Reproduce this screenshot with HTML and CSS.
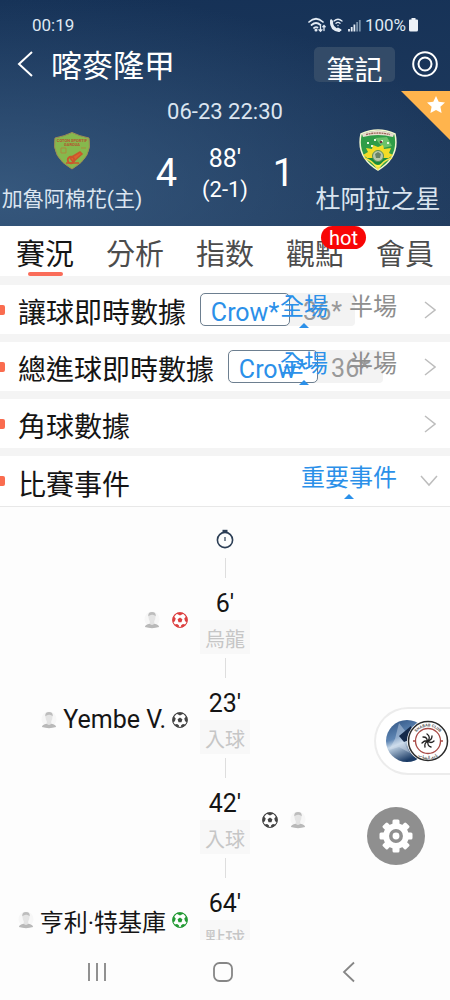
FILE: index.html
```html
<!DOCTYPE html>
<html lang="zh-Hant">
<head>
<meta charset="utf-8">
<meta name="viewport" content="width=device-width, initial-scale=1">
<title>喀麥隆甲</title>
<link rel="stylesheet" href="styles.css">
</head>
<body>
<svg class="defs" aria-hidden="true">
  <symbol id="ball" viewBox="0 0 24 24">
    <circle cx="12" cy="12" r="11.500" fill="currentColor"/>
    <path fill="#fff" fill-rule="evenodd" d="M12 5.200 7 2.600 3.300 7 5.600 9.600 4.400 14 1.800 15.200 4 18.600 7.600 18 10.400 20 10.200 22.600 13.800 22.600 13.600 20 16.400 18 20 18.600 22.200 15.200 19.600 14 18.400 9.600 20.700 7 17 2.600ZM12 8.300 15.600 11 14.200 15.200 9.800 15.200 8.400 11Z"/>
    <circle cx="12" cy="12" r="11" fill="none" stroke="currentColor" stroke-width="1.300"/>
  </symbol>
  <symbol id="person" viewBox="0 0 18 20">
    <circle cx="9" cy="9" r="8.500" fill="#f7f7f7"/>
    <path d="M6.500 10h5v5h-5z" fill="#e3e3e3"/>
    <ellipse cx="9" cy="7" rx="3.800" ry="5" fill="#e4e4e4"/>
    <path d="M4.800 6Q4.300 1 9 1T13.200 6Q11.500 3.800 9 4.200T4.800 6Z" fill="#bdbdbd"/>
    <path d="M1 18Q1.500 15 6.300 14.300 9 16.500 11.700 14.300 16.500 15 17 18 9 20.500 1 18Z" fill="#b9b9b9"/>
  </symbol>
</svg>
<div class="screen">
  <header class="hero">
    <div class="status">
      <span>00:19</span>
      <span class="status-right">
        <svg width="54" height="18" viewBox="0 0 54 18" fill="none" stroke="#e4ecf5" stroke-width="1.700" stroke-linecap="round">
          <path d="M1 6Q8-.5 15 6M3.500 9Q8 5 12.500 9M6 12Q8 10.300 9.500 11.500"/><circle cx="8" cy="14" r=".7"/>
          <path stroke-width="1.300" d="M12.500 10v5M11 13.800l1.500 1.500 1.500-1.500M16 14.500v-5M14.800 10.800 16 9.500l1.200 1.300"/>
          <path stroke-width="3" d="M23.500 5.500Q23 13 31 14.500"/><path stroke-width="2" d="M23.200 4.200v3M32.500 14l-2.500-1.500"/>
          <path stroke-width="1.300" d="M26 5Q30 1.500 34 5M28 7.300Q30 5.600 32 7.300M30 9.500v0"/>
          <path stroke-linecap="butt" stroke-width="1.800" d="M41 15.500v-2.500M43.700 15.500v-4.500M46.400 15.500V8.500"/>
          <path stroke-linecap="butt" stroke-width="1.800" stroke="#7890a8" d="M49.100 15.500V6M51.800 15.500V4"/>
        </svg>
        <span>100%</span>
        <svg width="9" height="14" viewBox="0 0 9 14"><path fill="#edf2f8" d="M2.500 0h4v1.500H8Q9 1.500 9 2.500V12q0 1.500-1.500 1.500h-6Q0 13.500 0 12V2.500q0-1 1-1h1.500Z"/></svg>
      </span>
    </div>
    <div class="titlebar">
      <button class="plain" aria-label="返回"><svg width="18" height="28" viewBox="0 0 18 28" fill="none" stroke="#fff" stroke-width="2"><path d="M16 2 3 14 16 26"/></svg></button>
      <h1>喀麥隆甲</h1>
      <button class="note">筆記</button>
      <button class="plain" aria-label="更多"><svg width="26" height="26" viewBox="0 0 26 26" fill="none" stroke="#fff" stroke-width="2"><circle cx="13" cy="13" r="11.800"/><circle cx="13" cy="13" r="6.500"/></svg></button>
    </div>
    <button class="fav" aria-label="收藏"><svg width="49" height="49" viewBox="0 0 49 49"><path fill="#ffb44d" d="M0 0H49V49Z"/><path fill="#fff" d="m35 5 2.700 5.700 6.300.8-4.600 4.300 1.200 6.200-5.600-3-5.600 3 1.200-6.200-4.600-4.300 6.300-.8Z"/></svg></button>
    <time class="date">06-23 22:30</time>
    <div class="match">
      <div class="team">
        <svg width="40" height="42" viewBox="0 0 40 42">
          <path d="M20 3.500Q27 7 37 9 41 28 20 40 -1 28 3 9 13 7 20 3.500Z" fill="#86b84d" stroke="#a08a55"/>
          <text x="20" y="13" class="crest-text">COTON SPORTIF</text><text x="20" y="17" class="crest-text">GAROUA</text>
          <path d="M9 19h5v5H9zM29 19h5" fill="none" stroke="#a98b3d"/>
          <path d="m18 29 10-6 2 2-9 8ZM14 34h13" fill="#dc6330" stroke="#c9572c" stroke-width="1.500"/>
          <circle cx="19" cy="31" r="3.300" fill="none" stroke="#c9572c" stroke-width="1.800"/>
        </svg>
        <span class="name">加魯阿棉花(主)</span>
      </div>
      <strong class="score">4</strong>
      <div class="clock"><span class="minute">88'</span><span class="half">(2-1)</span></div>
      <strong class="score">1</strong>
      <div class="team">
        <svg width="40" height="42" viewBox="0 0 40 42">
          <path d="M3 5Q20-3 37 5 42 28 20 41-2 28 3 5Z" fill="#2f9d47" stroke="#f4f7d0" stroke-width="1.500"/>
          <path d="M4 5Q20-2 36 5L35 8Q20 4 5 8Z" fill="#e9ded0"/><path d="M8 5.500Q20 2.500 32 5.500" fill="none" stroke="#9b6658" stroke-width="1.300" stroke-dasharray="2 .6"/>
          <path d="M17 9 29 8 34 17 25 19Z" fill="#6cc26a"/>
          <path d="M5 26 10 23 8 19 14 20 15 16 20 18 25 16 26 20 33 19 31 24 35 26 28 31 12 31Z" fill="#f3dc27"/>
          <path d="M6 29Q14 31 20 40 25 31 34 29" fill="#188b3b" stroke="#f3e34a" stroke-width="1.500"/>
          <circle cx="20" cy="27" r="5.500" fill="#b9c8aa" stroke="#5b8d54"/><path d="M17 25l3-2 3 2-1 4h-4Z" fill="#688265"/>
          <path d="M9 14h2M13 17h2M16 11h2M29 14h2M23 12h2" stroke="#e8f6dc" stroke-width="1.800"/><circle cx="23" cy="13" r="1.300" fill="#6e3440"/>
          <path d="M15 35 20 39 25 35 20 36Z" fill="#fff04b"/>
        </svg>
        <span class="name large">杜阿拉之星</span>
      </div>
    </div>
  </header>

  <nav class="tabs">
    <a class="active" href="#live">賽況</a>
    <a href="#analysis">分析</a>
    <a href="#index">指数</a>
    <a href="#views">觀點<span class="hot">hot</span></a>
    <a href="#member">會員</a>
  </nav>

  <main>
    <section class="panel">
      <h2>讓球即時數據</h2>
      <div class="sources"><button class="on">Crow*</button><button>36*</button></div>
      <div class="periods"><button class="on">全場</button><button>半場</button></div>
      <svg class="chev" width="12" height="18" viewBox="0 0 12 18"><path d="m1 1 10 8L1 17"/></svg>
    </section>
    <section class="panel">
      <h2>總進球即時數據</h2>
      <div class="sources"><button class="on">Crow*</button><button>36*</button></div>
      <div class="periods"><button class="on">全場</button><button>半場</button></div>
      <svg class="chev" width="12" height="18" viewBox="0 0 12 18"><path d="m1 1 10 8L1 17"/></svg>
    </section>
    <section class="panel">
      <h2>角球數據</h2>
      <svg class="chev" width="12" height="18" viewBox="0 0 12 18"><path d="m1 1 10 8L1 17"/></svg>
    </section>
    <section class="panel last">
      <h2>比賽事件</h2>
      <div class="periods"><button class="on">重要事件</button></div>
      <svg class="chev down" width="18" height="12" viewBox="0 0 18 12"><path d="m1 1 8 9 8-9"/></svg>
    </section>

    <div class="timeline">
      <svg class="watch" width="18" height="20" viewBox="0 0 18 20" fill="none" stroke="#2c3e55" stroke-width="1.600"><circle cx="9" cy="11" r="7.600"/><path stroke-width="2.400" d="M6.500 2h5"/><path stroke-width="1.200" d="M9 8v4"/></svg>
      <ol>
        <li>
          <div class="side home"><svg class="avatar"><use href="#person"/></svg><span></span><svg class="ball red"><use href="#ball"/></svg></div>
          <div class="mid"><b>6'</b><span>烏龍</span></div>
        </li>
        <li>
          <div class="side home"><svg class="avatar"><use href="#person"/></svg><span>Yembe V.</span><svg class="ball"><use href="#ball"/></svg></div>
          <div class="mid"><b>23'</b><span>入球</span></div>
        </li>
        <li>
          <div class="mid"><b>42'</b><span>入球</span></div>
          <div class="side away"><svg class="ball"><use href="#ball"/></svg><span></span><svg class="avatar"><use href="#person"/></svg></div>
        </li>
        <li>
          <div class="side home"><svg class="avatar"><use href="#person"/></svg><span class="han">亨利·特基庫</span><svg class="ball green"><use href="#ball"/></svg></div>
          <div class="mid"><b>64'</b><span>點球</span></div>
        </li>
      </ol>
    </div>
  </main>

  <div class="floating">
    <button class="matches" aria-label="賽事">
      <svg width="66" height="46" viewBox="0 0 66 46">
        <defs>
          <linearGradient id="sky" x1="0" y1="0" x2=".4" y2="1"><stop offset="0" stop-color="#2c5080"/><stop offset=".45" stop-color="#5f86b4"/><stop offset=".6" stop-color="#c5d7e8"/><stop offset="1" stop-color="#1c3c66"/></linearGradient>
          <path id="ringTop" d="M29.500 23a14.500 14.500 0 0 1 29 0"/>
          <path id="ringBottom" d="M26 23a18 18 0 0 0 36 0"/>
        </defs>
        <circle cx="23" cy="23" r="21" fill="url(#sky)"/>
        <path d="M15 5 22 14 20 25 26 35 15 29 5 32 11 21Z" fill="#dbe7f2" opacity=".4"/><path d="M15 18 27 8 30 20 20 24Z" fill="#14294a"/>
        <circle cx="44" cy="23" r="21" fill="#fff"/>
        <circle cx="44" cy="23" r="19.500" fill="#fff" stroke="#2b2b2b" stroke-width="1.500"/>
        <circle cx="44" cy="23" r="12.500" fill="none" stroke="#a94a46" stroke-width="1.300"/>
        <text class="ring-text"><textPath href="#ringTop" startOffset="50%">SHABAB CLUB</textPath></text>
        <text class="ring-text"><textPath href="#ringBottom" startOffset="50%">نادي الشباب</textPath></text>
        <path d="M29 23h2M57 23h2" stroke="#a94a46" stroke-width="1.500"/>
        <path d="M39 19q5 0 4 5M43 16q4 3 1 7M48 18q0 4-4 5M50 23q-3 3-6 0M47 29q-4-1-3-6M41 29q-1-4 3-6M38 25q3-3 6-2" fill="none" stroke="#222" stroke-width="1.300" stroke-linecap="round"/>
      </svg>
    </button>
    <button class="settings" aria-label="設定">
      <svg width="34" height="34" viewBox="-17 -17 34 34">
        <g fill="#fff"><circle r="12.800"/>
          <g id="teeth"><rect x="-3.500" y="-16.500" width="7" height="33" rx="1.500"/><rect x="-16.500" y="-3.500" width="33" height="7" rx="1.500"/></g>
          <use href="#teeth" transform="rotate(45)"/></g>
        <circle r="5.200" fill="#fff" stroke="#8f8f8f" stroke-width="3.500"/>
      </svg>
    </button>
  </div>

  <footer class="sysnav">
    <button class="plain" aria-label="最近"><svg width="22" height="22" viewBox="0 0 22 22"><path d="M3 2v18M11 2v18M19 2v18"/></svg></button>
    <button class="plain" aria-label="主畫面"><svg width="22" height="22" viewBox="0 0 22 22"><rect x="2" y="2" width="18" height="18" rx="5.500"/></svg></button>
    <button class="plain" aria-label="返回"><svg width="22" height="22" viewBox="0 0 22 22"><path d="M16 1.500 6 11l10 9.500"/></svg></button>
  </footer>
</div>
</body>
</html>
```
FILE: styles.css
```css
* { box-sizing: border-box; }
body {
  margin: 0;
  font-family: Roboto, "Noto Sans CJK TC", sans-serif;
  color: #151515;
  background: #fdfdfd;
}
h1, h2, ol { margin: 0; padding: 0; font-weight: 400; }
button { font: inherit; color: inherit; border: 0; background: none; padding: 0; cursor: pointer; }
a { color: inherit; text-decoration: none; }
svg { display: block; flex: none; }
.defs { position: absolute; width: 0; height: 0; }
.screen { position: relative; display: flex; flex-direction: column; height: 100vh; overflow: hidden; }

.hero {
  position: relative;
  flex: none;
  padding-bottom: 10px;
  color: #fff;
  background:
    radial-gradient(ellipse at 0% 85%, rgba(62, 98, 136, .75), rgba(62, 98, 136, 0) 75%),
    linear-gradient(175deg, #153156, #213c5f);
}
.status { display: flex; justify-content: space-between; align-items: center; height: 46px; padding: 4px 32px 0; font-size: 17px; color: #dfe8f2; }
.status-right { display: flex; align-items: center; gap: 3px; }
.titlebar { display: flex; align-items: center; height: 36px; padding: 0 12px 0 16px; }
.titlebar h1 { flex: 1; padding: 6px 0 0 17px; font-size: 31px; line-height: 36px; }
.note { width: 81px; height: 35px; padding-top: 5px; margin-right: 17px; border-radius: 5px; background: #334b68; font-size: 28px; line-height: 40px; overflow: hidden; }
.fav { position: absolute; right: 0; top: 91px; }
.date { display: block; padding-top: 17px; text-align: center; font-size: 22px; line-height: 26px; color: #dbe5f0; }
.match { display: grid; grid-template-columns: 32fr 10fr 16fr 10fr 32fr; justify-items: center; padding-top: 4px; }
.team { display: flex; flex-direction: column; align-items: center; gap: 12px; color: #dbe5f0; white-space: nowrap; }
.name { font-size: 21px; line-height: 33px; }
.name.large { font-size: 25px; }
.score { padding-top: 21px; font-size: 38px; line-height: 46px; font-weight: 400; }
.clock { display: flex; flex-direction: column; align-items: center; padding-top: 14px; }
.minute { font-size: 25px; line-height: 32px; }
.half { font-size: 22px; line-height: 30px; }
.crest-text { font-size: 4px; font-weight: 700; text-anchor: middle; fill: #b5542f; }

.tabs { display: grid; grid-template-columns: repeat(5, 1fr); flex: none; height: 50px; background: #fff; }
.tabs a { position: relative; display: flex; justify-content: center; height: 50px; padding-top: 8px; font-size: 29px; line-height: 42px; color: #4c4c4c; }
.tabs .active { color: #151515; }
.tabs .active::after { content: ""; position: absolute; bottom: 0; width: 35px; height: 4px; border-radius: 2px; background: #fa6c59; }
.hot { position: absolute; left: 51px; top: 0; width: 45px; height: 23px; border-radius: 12px; background: #f80606; color: #fff; font-size: 20px; line-height: 24px; text-align: center; }

main { display: flex; flex-direction: column; flex: 1; min-height: 0; }
.panel { position: relative; display: flex; align-items: center; flex: none; height: 58px; padding-right: 14px; border-top: 9px solid #f4f4f4; background: #fff; }
.panel + .panel { height: 57px; border-top-width: 8px; }
.panel.last { height: 59px; border-bottom: 1px solid #e8e8e8; }
.panel::before { content: ""; width: 5px; height: 10px; border-radius: 0 2px 2px 0; background: #fa6c4f; }
.panel h2 { padding: 9px 0 0 13px; font-size: 28px; line-height: 40px; }
.sources { display: flex; margin-left: 14px; border-radius: 4px; background: #f3f3f3; font-size: 25px; line-height: 37px; color: #999; }
.sources button { width: 65px; height: 33px; }
.sources .on { width: 90px; border: 1px solid #6d7f90; border-radius: 5px; background: #fff; color: #2b90e9; }
.periods { position: absolute; right: 53px; top: 6px; display: flex; gap: 21px; font-size: 24px; line-height: 32px; color: #8e8e8e; }
.periods button { display: flex; flex-direction: column; align-items: center; }
.periods .on { color: #2b90e9; }
.periods .on::after { content: ""; border: 5px solid transparent; border-top: 0; border-bottom-color: #2b90e9; }
.chev { margin-left: auto; fill: none; stroke: #bdbdbd; stroke-width: 1.5; }
.chev.down { margin-right: -2px; }

.timeline { flex: 1; min-height: 0; overflow: hidden; padding-top: 22px; background: #fdfdfd; }
.watch { margin: 0 auto 9px; }
.timeline ol { list-style: none; }
.timeline li { display: grid; grid-template-columns: 1fr 50px 1fr; height: 100px; }
.mid { grid-column: 2; grid-row: 1; display: flex; flex-direction: column; align-items: center; }
.mid::before { content: ""; width: 1px; height: 20px; background: #dedede; }
.mid b { padding-top: 9px; font-size: 25px; line-height: 33px; font-weight: 400; }
.mid span { width: 100%; height: 34px; background: #f8f8f8; color: #c6c6c6; font-size: 20px; line-height: 41px; text-align: center; }
.side { grid-row: 1; display: flex; align-items: center; height: 32px; margin-top: 46px; gap: 6px; font-size: 25px; line-height: 34px; white-space: nowrap; }
.side .han { padding-top: 5px; font-size: 24px; }
.home { grid-column: 1; justify-content: flex-end; padding-right: 12px; }
.away { grid-column: 3; padding-left: 12px; }
.avatar { width: 16px; height: 18px; }
.ball { width: 16px; height: 16px; color: #444; }
.ball.red { color: #dc4040; }
.ball.green { color: #249a35; }

.floating { position: absolute; right: 0; bottom: 135px; display: flex; flex-direction: column; align-items: flex-end; gap: 32px; }
.matches { display: flex; align-items: center; height: 68px; padding-left: 8px; border: 2px solid #ececec; border-right: 0; border-radius: 34px 0 0 34px; background: #fff; }
.settings { display: grid; place-items: center; width: 58px; height: 58px; margin-right: 25px; border-radius: 50%; background: #8f8f8f; }
.ring-text { font-size: 4px; font-weight: 700; text-anchor: middle; fill: #555; }

.sysnav { display: flex; justify-content: space-between; align-items: center; flex: none; height: 60px; padding: 4px 90px 0 86px; background: #fdfdfd; }
.sysnav svg { fill: none; stroke: #868686; stroke-width: 1.8; }
```
